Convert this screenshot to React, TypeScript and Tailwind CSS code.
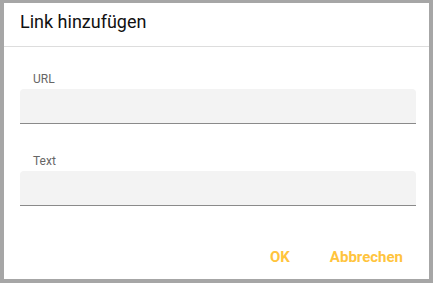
import React from "react";

const Field: React.FC<{ label: string }> = ({ label }) => {
  return (
    <div className="flex flex-col">
      <label className="ml-[13px] text-[12px] leading-[16px] text-[#666666]">{label}</label>
      <div className="mt-[2px] h-[35px] w-[396px] rounded-t-[4px] border-b border-[#8a8a8a] bg-[#f3f3f3]" />
    </div>
  );
};

const App: React.FC = () => {
  return (
    <div className="h-[283px] w-[433px] bg-[#a6a6a6] px-[4px] pb-[4px] pt-[3px] font-['Roboto',sans-serif]">
      <div className="flex h-full flex-col bg-white">
        <div className="h-[44px] border-b border-[#dddddd] pl-[16px] pt-[5px]">
          <h2 className="text-[18px] font-normal leading-[28px] text-[#111111]">Link hinzufügen</h2>
        </div>
        <div className="flex flex-col gap-[29px] pl-[16px] pt-[24px]">
          <Field label="URL" />
          <Field label="Text" />
        </div>
        <div className="mt-[41px] flex justify-end gap-[40px] pr-[26px]">
          <button className="text-[15px] font-bold leading-[20px] text-[#ffc43d]">OK</button>
          <button className="text-[15px] font-bold leading-[20px] text-[#ffc43d]">Abbrechen</button>
        </div>
      </div>
    </div>
  );
};

export default App;
